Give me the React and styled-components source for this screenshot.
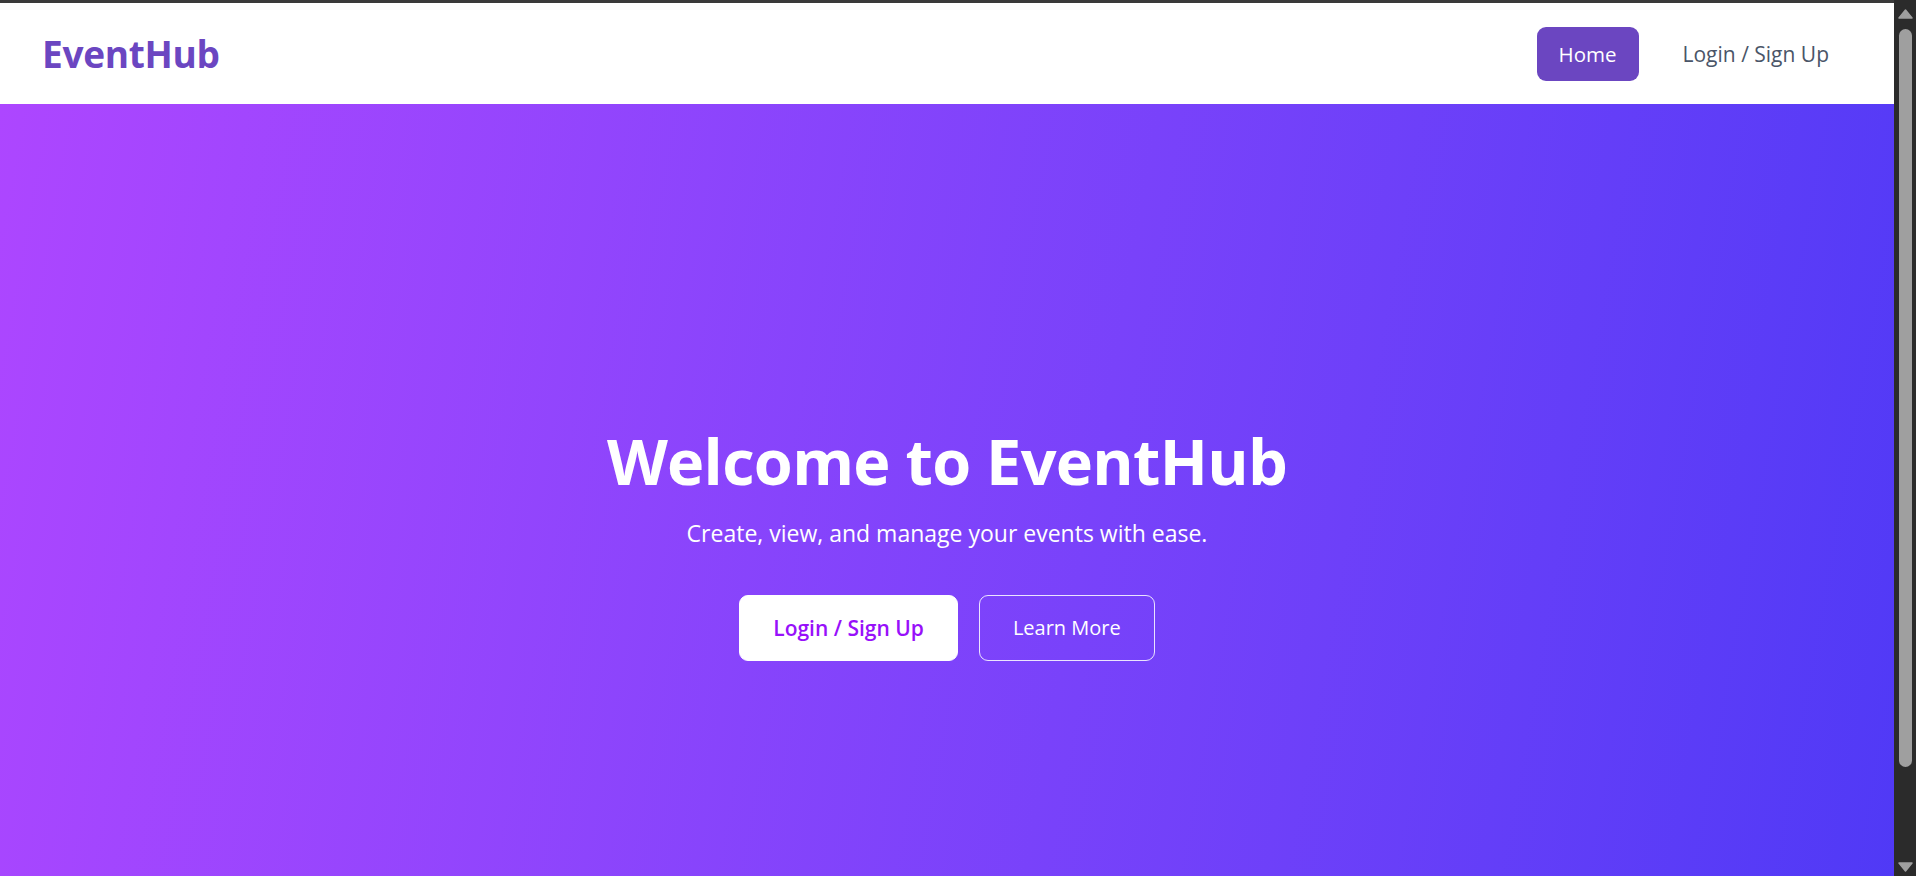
import styled, { createGlobalStyle } from "styled-components";

const GlobalStyle = createGlobalStyle`
  html, body {
    margin: 0;
    height: 100%;
    overflow: hidden;
  }
  body {
    font-family: "Open Sans", "Noto Sans", "Liberation Sans", sans-serif;
    background: #ffffff;
  }
`;

const Shell = styled.div`
  display: flex;
  height: 100vh;
`;

const Page = styled.div`
  flex: 1;
  min-width: 0;
  overflow: hidden;
`;

// window scrollbar as seen in the capture
const ScrollRail = styled.div`
  width: 22px;
  flex-shrink: 0;
  display: flex;
  flex-direction: column;
  align-items: flex-start;
  background: #2b2b2b;
`;

const ScrollArrow = styled.svg`
  display: block;
  width: 22px;
  height: 26px;
  flex-shrink: 0;
  margin-top: ${(p) => (p.$down ? "auto" : "0")};
`;

const ScrollThumb = styled.div`
  width: 13px;
  height: 738px;
  margin: 3px 0 0 5px;
  border-radius: 7px;
  background: #9f9f9f;
`;

const Header = styled.header`
  display: flex;
  align-items: center;
  justify-content: space-between;
  height: 101px;
  padding: 0 43px 0 42px;
  background: #ffffff;
  border-top: 3px solid #3a3a3a;
`;

const Logo = styled.a`
  font-size: 37px;
  font-weight: 700;
  color: #6b46c1;
  text-decoration: none;
  letter-spacing: -0.3px;
`;

const Nav = styled.nav`
  display: flex;
  align-items: center;
  gap: 22px;
`;

const NavLink = styled.a`
  display: block;
  padding: 12px 22px;
  font-size: ${(p) => (p.$active ? "20.5px" : "21px")};
  line-height: 30px;
  border-radius: 9px;
  text-decoration: none;
  color: ${(p) => (p.$active ? "#ffffff" : "#4a5568")};
  background: ${(p) => (p.$active ? "#6b46c1" : "transparent")};
`;

const Hero = styled.section`
  min-height: 100vh;
  display: flex;
  flex-direction: column;
  align-items: center;
  justify-content: center;
  text-align: center;
  color: #ffffff;
  background: linear-gradient(100deg in oklab, #ad46ff 0%, #4f39f6 100%);
`;

const Title = styled.h1`
  margin: 0 0 18px;
  font-size: 63px;
  line-height: 1.2;
  font-weight: 700;
  letter-spacing: -0.7px;
`;

const Subtitle = styled.p`
  margin: 0 0 45px;
  font-size: 23px;
  line-height: 33px;
`;

const Actions = styled.div`
  display: flex;
  gap: 21px;
`;

const Button = styled.a`
  display: block;
  padding: 17px 33px;
  font-size: ${(p) => (p.$primary ? "21px" : "20px")};
  line-height: 30px;
  border-radius: 9px;
  text-decoration: none;
  font-weight: ${(p) => (p.$primary ? 600 : 400)};
  color: ${(p) => (p.$primary ? "#9810fa" : "#ffffff")};
  background: ${(p) => (p.$primary ? "#ffffff" : "transparent")};
  border: 1px solid ${(p) => (p.$primary ? "#ffffff" : "rgba(255, 255, 255, 0.85)")};
`;

const App = () => {
  return (
    <Shell>
      <GlobalStyle />
      <Page>
        <Header>
          <Logo href="#">EventHub</Logo>
          <Nav>
            <NavLink $active href="#">
              Home
            </NavLink>
            <NavLink href="#">Login / Sign Up</NavLink>
          </Nav>
        </Header>
        <Hero>
          <Title>Welcome to EventHub</Title>
          <Subtitle>Create, view, and manage your events with ease.</Subtitle>
          <Actions>
            <Button $primary href="#">
              Login / Sign Up
            </Button>
            <Button href="#">Learn More</Button>
          </Actions>
        </Hero>
      </Page>
      <ScrollRail>
        <ScrollArrow viewBox="0 0 22 26">
          <path
            d="M11.5 10 L18 18 H5 Z"
            fill="#9f9f9f"
            stroke="#9f9f9f"
            strokeWidth="1.5"
            strokeLinejoin="round"
          />
        </ScrollArrow>
        <ScrollThumb />
        <ScrollArrow $down viewBox="0 0 22 26">
          <path
            d="M5 13 H18 L11.5 21 Z"
            fill="#9f9f9f"
            stroke="#9f9f9f"
            strokeWidth="1.5"
            strokeLinejoin="round"
          />
        </ScrollArrow>
      </ScrollRail>
    </Shell>
  );
};

export default App;
